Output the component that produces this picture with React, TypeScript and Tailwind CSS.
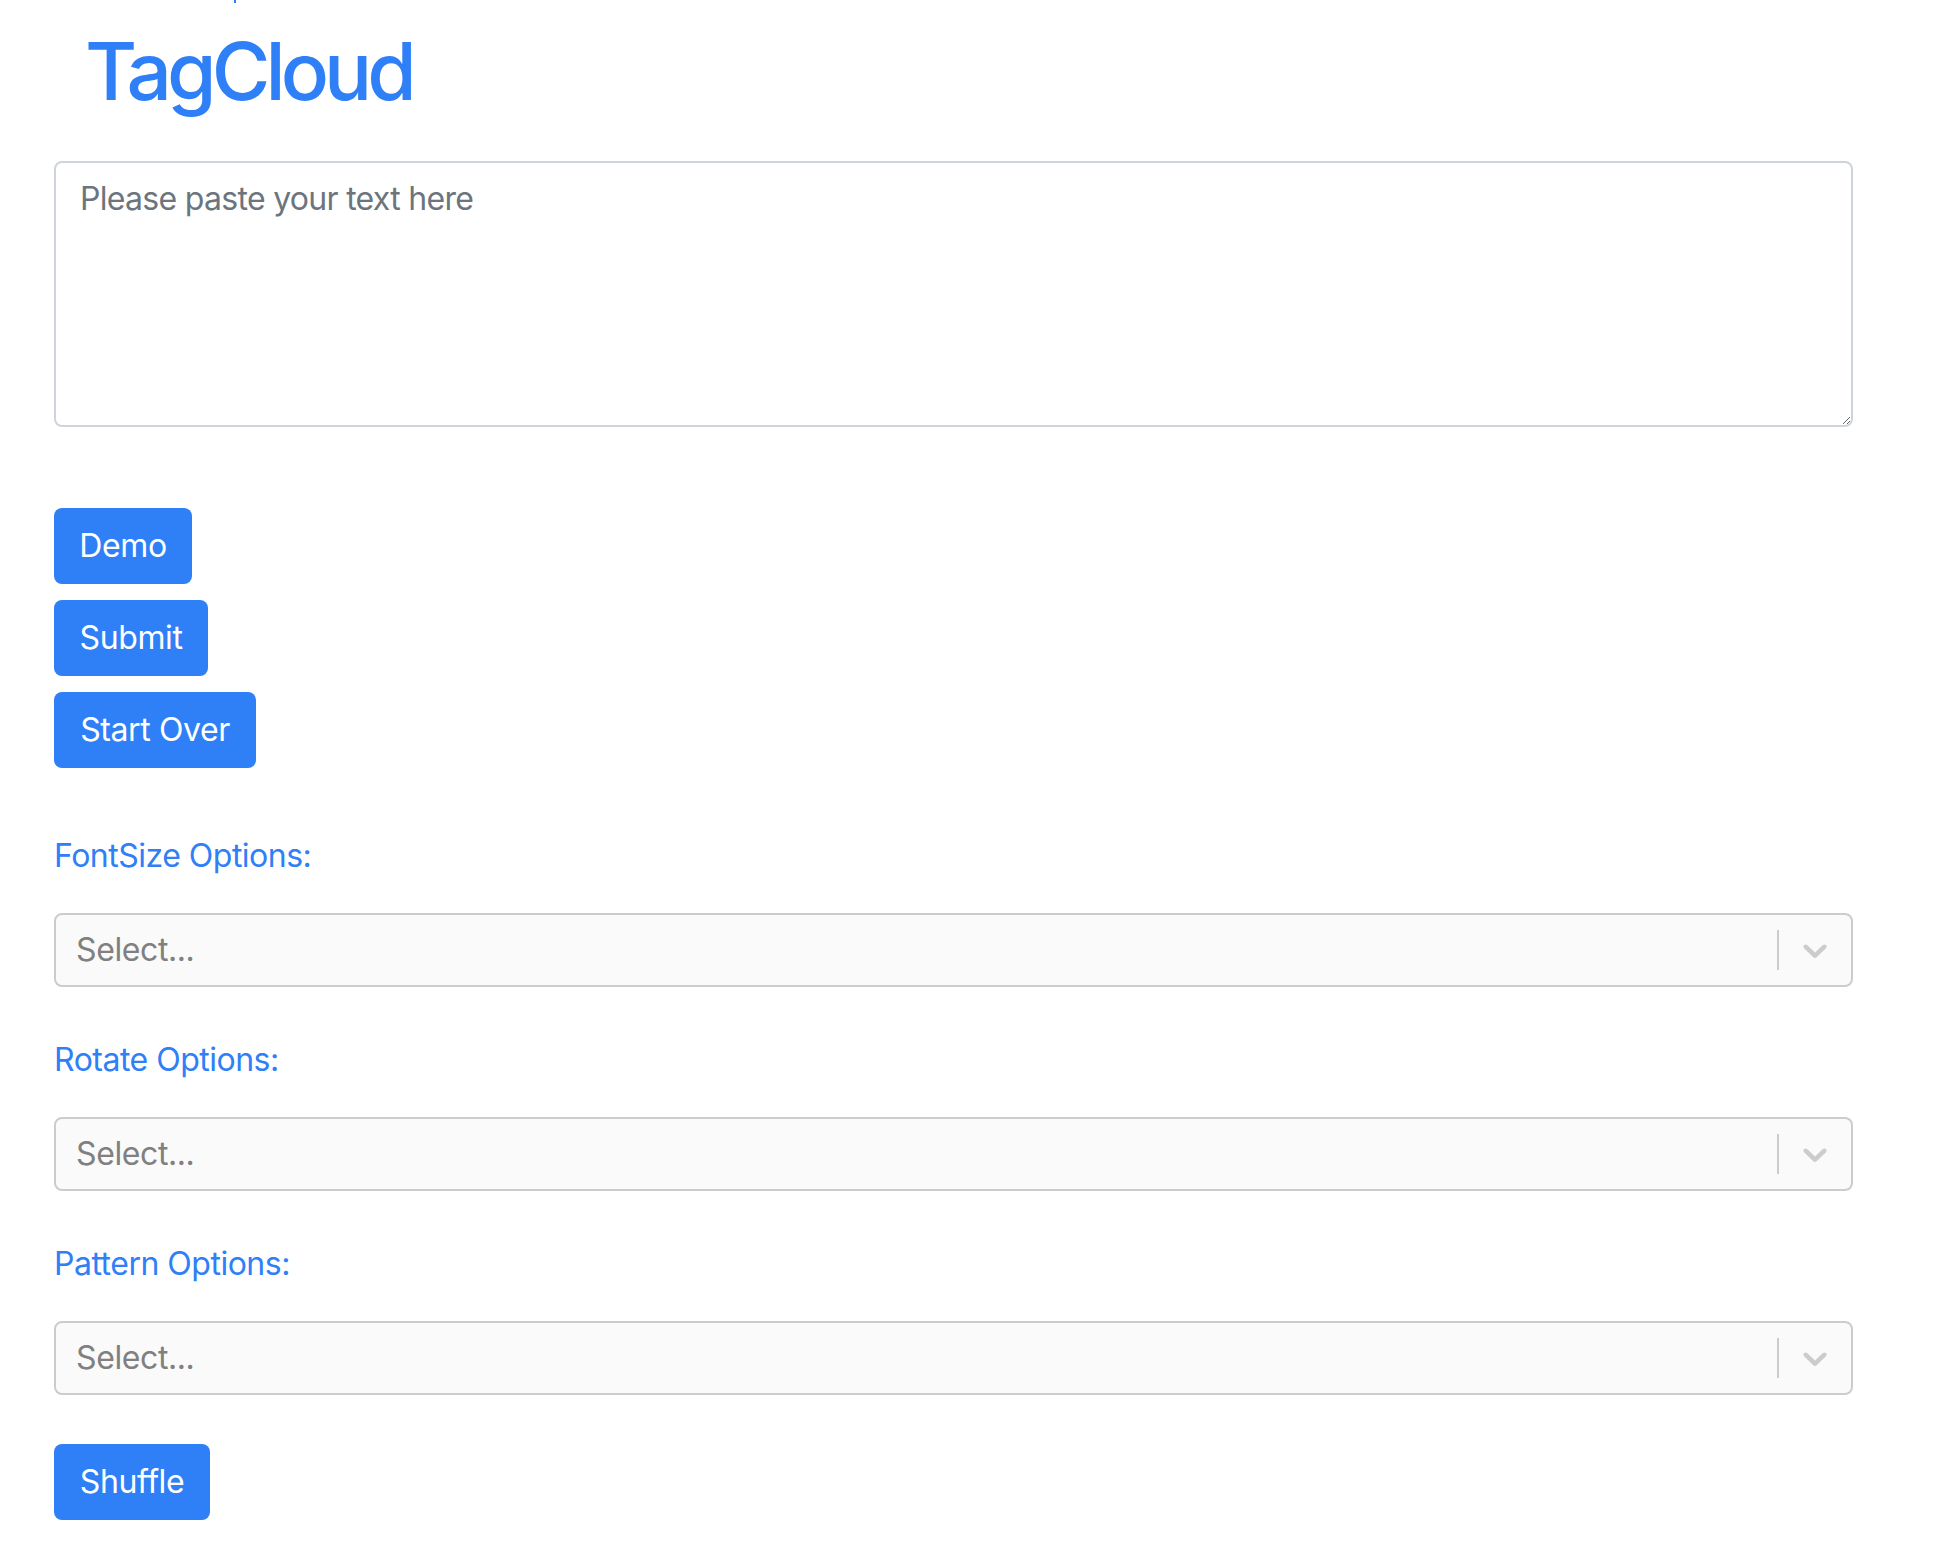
import React from "react";

const BLUE = "text-[#2f80f7]";

function Chevron() {
  return (
    <svg viewBox="0 0 20 20" width="40" height="40" aria-hidden="true" className="fill-[#cccccc]">
      <path d="M4.516 7.548c0.436-0.446 1.043-0.481 1.576 0l3.908 3.747 3.908-3.747c0.533-0.481 1.141-0.446 1.574 0 0.436 0.445 0.408 1.197 0 1.615-0.406 0.418-4.695 4.502-4.695 4.502-0.217 0.223-0.502 0.335-0.787 0.335s-0.57-0.112-0.789-0.335c0 0-4.287-4.084-4.695-4.502s-0.436-1.17 0-1.615z" />
    </svg>
  );
}

function SelectBox() {
  return (
    <div className="flex h-[74px] items-center rounded-[8px] border-2 border-[#cccccc] bg-[#fafafa]">
      <div className="flex-1 pl-[20px] text-[32px] leading-[48px] tracking-[-0.4px] text-[#808080]">Select...</div>
      <div className="h-[40px] w-[2px] bg-[#cccccc]" />
      <div className="flex items-center px-[16px]">
        <Chevron />
      </div>
    </div>
  );
}

function Btn({ label, w }: { label: string; w: string }) {
  return (
    <button
      type="button"
      className={`flex h-[76px] items-center justify-center rounded-[8px] bg-[#2f80f7] text-[32px] leading-[48px] tracking-[-0.4px] text-white ${w}`}
    >
      {label}
    </button>
  );
}

function Group({ label, first }: { label: string; first?: boolean }) {
  return (
    <div className={first ? "mt-[64px]" : "mt-[49px]"}>
      <label className={`block text-[32px] leading-[48px] tracking-[-0.5px] ${BLUE}`}>{label}</label>
      <div className="mt-[33px]">
        <SelectBox />
      </div>
    </div>
  );
}

export default function App() {
  return (
    <div
      className="min-h-screen bg-white pl-[54px] pr-[101px]"
      style={{ fontFamily: "Inter, 'Liberation Sans', sans-serif" }}
    >
      <div className="ml-[180px] h-[3px] w-[2px] bg-[#2f80f7]" />
      <h1 className={`ml-[31px] mt-[20px] text-[80px] font-medium leading-[96px] tracking-[-4.9px] ${BLUE}`}>TagCloud</h1>
      <textarea
        className="mt-[42px] block h-[266px] w-full rounded-[8px] border-2 border-[#ced4da] bg-white px-[24px] py-[12px] text-[32px] leading-[48px] tracking-[-0.7px] text-[#495057] outline-none placeholder:text-[#6c757d]"
        placeholder="Please paste your text here"
      />
      <div className="mt-[81px] flex flex-col items-start gap-[16px]">
        <Btn label="Demo" w="w-[138px]" />
        <Btn label="Submit" w="w-[154px]" />
        <Btn label="Start Over" w="w-[202px]" />
      </div>
      <Group label="FontSize Options:" first />
      <Group label="Rotate Options:" />
      <Group label="Pattern Options:" />
      <div className="mt-[49px] pb-[29px]">
        <Btn label="Shuffle" w="w-[156px]" />
      </div>
    </div>
  );
}
